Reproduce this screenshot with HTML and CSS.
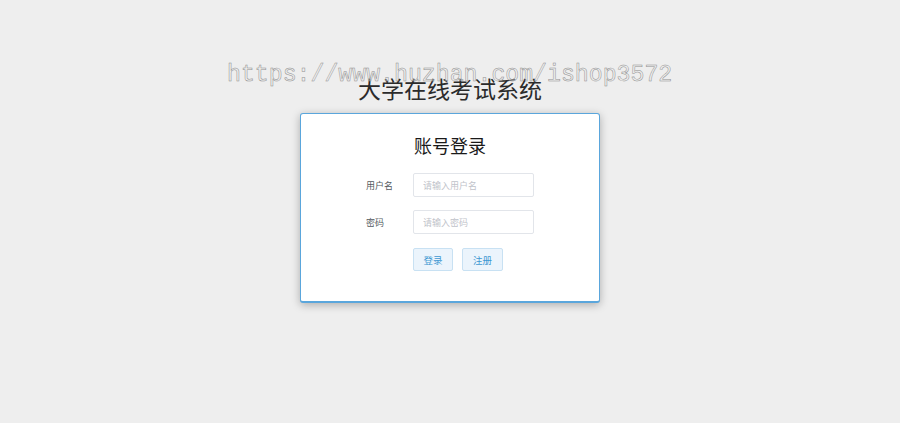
FILE: index.html
```html
<!DOCTYPE html>
<html lang="zh-CN">
<head>
<meta charset="utf-8">
<title>大学在线考试系统</title>
<link rel="stylesheet" href="styles.css">
</head>
<body>
<div class="page">
  <h1 class="site-title">大学在线考试系统</h1>
  <div class="card">
    <h2 class="card-title">账号登录</h2>
    <form class="form">
      <div class="row">
        <label class="label">用户名</label>
        <input class="input" type="text" placeholder="请输入用户名">
      </div>
      <div class="row">
        <label class="label">密码</label>
        <input class="input" type="password" placeholder="请输入密码">
      </div>
      <div class="row buttons">
        <span class="label"></span>
        <button type="button" class="btn btn-a">登录</button>
        <button type="button" class="btn btn-b">注册</button>
      </div>
    </form>
  </div>
  <div class="watermark">https://www.huzhan.com/ishop3572</div>
</div>
</body>
</html>
```
FILE: styles.css
```css
html, body {
  margin: 0;
  padding: 0;
  background: #eeeeee;
}
body {
  font-family: "Noto Sans CJK SC", "Noto Sans", sans-serif;
  width: 900px;
  height: 423px;
  overflow: hidden;
}
.page {
  position: relative;
  display: flex;
  flex-direction: column;
  align-items: center;
  padding-top: 73px;
}
.site-title {
  margin: 0;
  font-size: 23px;
  line-height: 30px;
  font-weight: 400;
  color: #2b2b2b;
  position: relative;
  z-index: 1;
}
.card {
  margin-top: 10px;
  width: 298px;
  height: 168px;
  border: 1px solid #5aa6dc;
  border-bottom: 2px solid #5aa6dc;
  border-radius: 3px;
  background: #ffffff;
  box-shadow: 0 2px 8px rgba(0, 0, 0, 0.28);
  display: flex;
  flex-direction: column;
  align-items: center;
  padding-top: 19px;
  box-sizing: content-box;
}
.card-title {
  margin: 0;
  font-size: 18px;
  line-height: 24px;
  font-weight: 400;
  color: #1a1a1a;
}
.form {
  margin-top: 16px;
  width: 168px;
  display: flex;
  flex-direction: column;
  gap: 13px;
}
.row {
  display: flex;
  align-items: center;
  height: 24px;
}
.row.buttons {
  margin-top: 1px;
  height: 23px;
}
.label {
  width: 47px;
  flex: none;
  font-size: 9px;
  color: #555a60;
}
.input {
  width: 121px;
  height: 24px;
  box-sizing: border-box;
  margin: 0;
  border: 1px solid #e2e5ea;
  border-radius: 2px;
  padding: 0 0 0 9px;
  font-family: "Noto Sans CJK SC", "Noto Sans", sans-serif;
  font-size: 9px;
  color: #606266;
  background: #fff;
  outline: none;
}
.input::placeholder {
  color: #bfc3ca;
}
.btn {
  height: 23px;
  box-sizing: border-box;
  margin: 0;
  padding: 0;
  border: 1px solid #c8e1f3;
  border-radius: 2px;
  background: #ebf4fc;
  color: #3e98d2;
  font-family: "Noto Sans CJK SC", "Noto Sans", sans-serif;
  font-size: 9.5px;
  cursor: pointer;
}
.btn-a {
  width: 40px;
}
.btn-b {
  width: 41px;
  margin-left: 9px;
}
.watermark {
  position: absolute;
  left: 227px;
  top: 60px;
  font-family: "Liberation Mono", monospace;
  font-size: 23.2px;
  line-height: 30px;
  color: rgba(238, 238, 238, 0.4);
  -webkit-text-stroke: 0.5px #8f8f8f;
  white-space: nowrap;
  z-index: 2;
  pointer-events: none;
}
```
